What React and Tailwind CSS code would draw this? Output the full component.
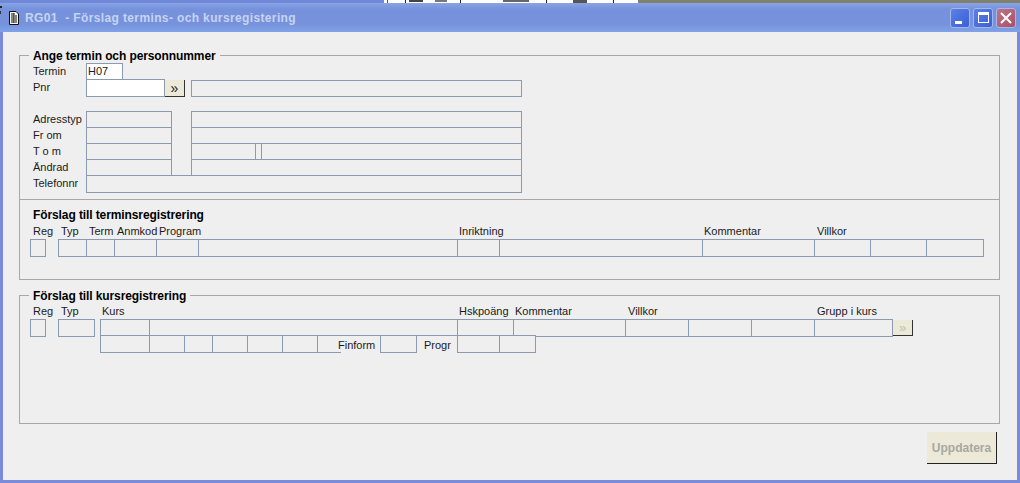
function C({ w, h = "h-[18px]", white = false, noRight = false, children }) {
  return (
    <div
      className={`${w} ${h} -ml-px first:ml-0 border-[#8c9ab0] border-t border-b border-l ${
        noRight ? "" : "border-r"
      } ${white ? "bg-white" : "bg-[#efefef]"} shrink-0 flex items-center pl-px leading-none text-[11px]`}
    >
      {children}
    </div>
  );
}

function L({ w, children, className = "" }) {
  return <div className={`${w} shrink-0 whitespace-nowrap leading-[16px] ${className}`}>{children}</div>;
}

function T({ children, className = "" }) {
  return (
    <div className={`font-bold text-[12px] tracking-[-0.1px] leading-[16px] text-black whitespace-nowrap ${className}`}>
      {children}
    </div>
  );
}

function DocIcon() {
  return (
    <svg width="12" height="16" viewBox="0 0 12 16" className="shrink-0">
      <path d="M1.5 1.5H8L10.5 4V14.5H1.5Z" fill="#f6f6ee" stroke="#111" />
      <path d="M3 4H7M3 6H9M3 8H9M3 10H9M3 12H9" stroke="#111" strokeWidth="1.2" />
      <path d="M5.5 3V13" stroke="#555" strokeWidth="1" />
    </svg>
  );
}

function WinBtn({ className = "", children }) {
  return (
    <div className={`w-[20px] h-[20px] rounded-[3px] border border-[#a4b6ec] flex items-center justify-center ${className}`}>
      {children}
    </div>
  );
}

function TopStrip() {
  return (
    <div className="h-[3px] shrink-0 flex">
      <div className="w-[384px] bg-[#7088d8]" />
      <div className="w-[254px] bg-white flex items-start">
        <div className="w-[1px] h-[3px] ml-[3px] bg-[#555]" />
        <div className="w-[1px] h-[3px] ml-[17px] bg-[#222]" />
        <div className="w-[14px] h-[2px] ml-[3px] bg-[#444]" />
        <div className="w-[12px] h-[2px] ml-[12px] bg-[#777]" />
        <div className="w-[1px] h-[3px] ml-[13px] bg-[#222]" />
        <div className="w-[26px] h-[2px] ml-[42px] bg-[#666]" />
        <div className="w-[1px] h-[3px] ml-[17px] bg-[#222]" />
        <div className="w-[14px] h-[3px] ml-[26px] bg-[#555]" />
        <div className="w-[1px] h-[3px] ml-[26px] bg-[#222]" />
      </div>
      <div className="flex-1 bg-[#80806f]" />
    </div>
  );
}

export default function App() {
  return (
    <div className="relative w-[1020px] h-[483px] overflow-hidden flex flex-col bg-[#7b8bdc] font-['Liberation_Sans',Arial,sans-serif] text-[11px] text-[#1a1a1a]">
      <TopStrip />
      <div className="absolute left-0 top-[6px] w-[2px] h-[2px] bg-[#222]" />
      <div className="absolute left-0 top-[11px] w-[1px] h-[3px] bg-[#333]" />
      <div className="h-[29px] shrink-0 flex items-center pl-[8px] pr-[4px] bg-[linear-gradient(180deg,#8ba3e6_0px,#7692dc_6px,#7692dc_21px,#80a2e8_29px)]">
        <DocIcon />
        <div className="ml-[5px] mt-px font-bold text-[12px] tracking-[0.37px] text-[#c6d4f2] whitespace-pre">
          RG01  - Förslag termins- och kursregistering
        </div>
        <div className="ml-auto flex gap-[3px]">
          <WinBtn className="bg-[linear-gradient(135deg,#5b80e4,#3a5fd6)]">
            <div className="w-[7px] h-[3px] bg-white mt-[9px] -ml-[3px]" />
          </WinBtn>
          <WinBtn className="bg-[linear-gradient(135deg,#5b80e4,#3a5fd6)]">
            <div className="w-[11px] h-[11px] border border-white border-t-[3px]" />
          </WinBtn>
          <WinBtn className="bg-[linear-gradient(135deg,#c07484,#a85068)]">
            <svg width="12" height="12" viewBox="0 0 12 12">
              <path d="M1 1L11 11M11 1L1 11" stroke="#fff" strokeWidth="2" />
            </svg>
          </WinBtn>
        </div>
      </div>

      <div className="flex-1 mx-[3px] mb-[3px] bg-[#efefef] flex flex-col pl-[16px] pt-[23px]">
        {/* Upper panel */}
        <div className="w-[981px] h-[225px] border border-[#a8a8a8] flex flex-col shrink-0">
          <div className="h-[144px] border-b border-[#a8a8a8] pl-[13px] shrink-0">
            <T className="-mt-[8px] -ml-[4px] px-[4px] w-fit bg-[#efefef]">Ange termin och personnummer</T>
            <div className="flex h-[17px] -mt-px">
              <L w="w-[54px]">Termin</L>
              <C w="w-[37px]" h="h-[17px]" white>H07</C>
            </div>
            <div className="flex -mt-px">
              <L w="w-[54px]">Pnr</L>
              <C w="w-[79px]" white />
              <div className="w-[20px] h-[17px] mt-px shrink-0 bg-[#ece9d8] border-r border-b border-[#333] flex items-center justify-center text-[14px] leading-none">
                »
              </div>
              <div className="ml-[6px]">
                <div className="mt-px">
                  <C w="w-[331px]" h="h-[17px]" />
                </div>
              </div>
            </div>

            <div className="flex mt-[14px] h-[17px]">
              <L w="w-[54px]">Adresstyp</L>
              <C w="w-[86px]" h="h-[17px]" />
              <div className="ml-[19px]">
                <C w="w-[331px]" h="h-[17px]" />
              </div>
            </div>
            <div className="flex -mt-px h-[17px]">
              <L w="w-[54px]">Fr om</L>
              <C w="w-[86px]" h="h-[17px]" />
              <div className="ml-[19px]">
                <C w="w-[331px]" h="h-[17px]" />
              </div>
            </div>
            <div className="flex -mt-px h-[17px]">
              <L w="w-[54px]">T o m</L>
              <C w="w-[86px]" h="h-[17px]" />
              <div className="ml-[19px] flex">
                <C w="w-[65px]" h="h-[17px]" />
                <C w="w-[7px]" h="h-[17px]" />
                <C w="w-[261px]" h="h-[17px]" />
              </div>
            </div>
            <div className="flex -mt-px h-[17px]">
              <L w="w-[54px]">Ändrad</L>
              <C w="w-[86px]" h="h-[17px]" />
              <div className="ml-[19px]">
                <C w="w-[331px]" h="h-[17px]" />
              </div>
            </div>
            <div className="flex -mt-px">
              <L w="w-[54px]">Telefonnr</L>
              <C w="w-[436px]" />
            </div>
          </div>

          {/* Terminsregistrering */}
          <div className="pt-[7px] flex-1">
            <T className="ml-[13px]">Förslag till terminsregistrering</T>
            <div className="flex ml-[13px]">
              <L w="w-[28px]">Reg</L>
              <L w="w-[28px]">Typ</L>
              <L w="w-[28px]">Term</L>
              <L w="w-[42px]">Anmkod</L>
              <L w="w-[300px]">Program</L>
              <L w="w-[245px]">Inriktning</L>
              <L w="w-[113px]">Kommentar</L>
              <L w="w-[60px]">Villkor</L>
            </div>
            <div className="flex ml-[10px]">
              <C w="w-[16px]" />
              <div className="flex ml-[12px]">
                <C w="w-[29px]" />
                <C w="w-[29px]" />
                <C w="w-[43px]" />
                <C w="w-[43px]" />
                <C w="w-[260px]" />
                <C w="w-[43px]" />
                <C w="w-[204px]" />
                <C w="w-[113px]" />
                <C w="w-[57px]" />
                <C w="w-[57px]" />
                <C w="w-[58px]" />
              </div>
            </div>
          </div>
        </div>

        {/* Kursregistrering */}
        <div className="w-[981px] h-[129px] mt-[15px] border border-[#a8a8a8] shrink-0">
          <T className="-mt-[8px] ml-[9px] px-[4px] w-fit bg-[#efefef]">Förslag till kursregistrering</T>
          <div className="flex ml-[13px] -mt-px">
            <L w="w-[28px]">Reg</L>
            <L w="w-[41px]">Typ</L>
            <L w="w-[357px]">Kurs</L>
            <L w="w-[56px]">Hskpoäng</L>
            <L w="w-[113px]">Kommentar</L>
            <L w="w-[189px]">Villkor</L>
            <L w="w-[80px]">Grupp i kurs</L>
          </div>
          <div className="flex items-start ml-[10px]">
            <C w="w-[16px]" />
            <div className="ml-[12px]">
              <C w="w-[37px]" />
            </div>
            <div className="flex ml-[5px]">
              <C w="w-[50px]" h="h-[17px]" />
              <C w="w-[309px]" h="h-[17px]" />
              <C w="w-[57px]" />
              <C w="w-[113px]" />
              <C w="w-[64px]" />
              <C w="w-[64px]" />
              <C w="w-[64px]" />
              <C w="w-[79px]" />
            </div>
            <div className="w-[20px] h-[16px] mt-px shrink-0 bg-[#ece9d8] border-r border-b border-[#333] flex items-center justify-center text-[13px] leading-none text-[#c4c1ab]">
              »
            </div>
          </div>
          <div className="flex items-start ml-[80px] -mt-[2px] relative">
            <div className="flex">
              <C w="w-[50px]" />
              <C w="w-[36px]" />
              <C w="w-[29px]" />
              <C w="w-[36px]" />
              <C w="w-[36px]" />
              <C w="w-[36px]" />
              <C w="w-[24px]" noRight />
            </div>
            <L w="w-[43px]" className="mt-[2px] -ml-[3px] relative">Finform</L>
            <C w="w-[37px]" />
            <L w="w-[33px]" className="ml-[7px] mt-[2px]">Progr</L>
            <div className="flex">
              <C w="w-[43px]" />
              <C w="w-[37px]" />
            </div>
          </div>
        </div>

        <div className="flex justify-end pr-[20px] mt-[8px]">
          <div className="w-[70px] h-[32px] bg-[#ece9d8] border-r border-b border-[#222] flex items-center justify-center font-bold text-[12px] text-[#a8a8a0]">
            Uppdatera
          </div>
        </div>
      </div>
    </div>
  );
}
